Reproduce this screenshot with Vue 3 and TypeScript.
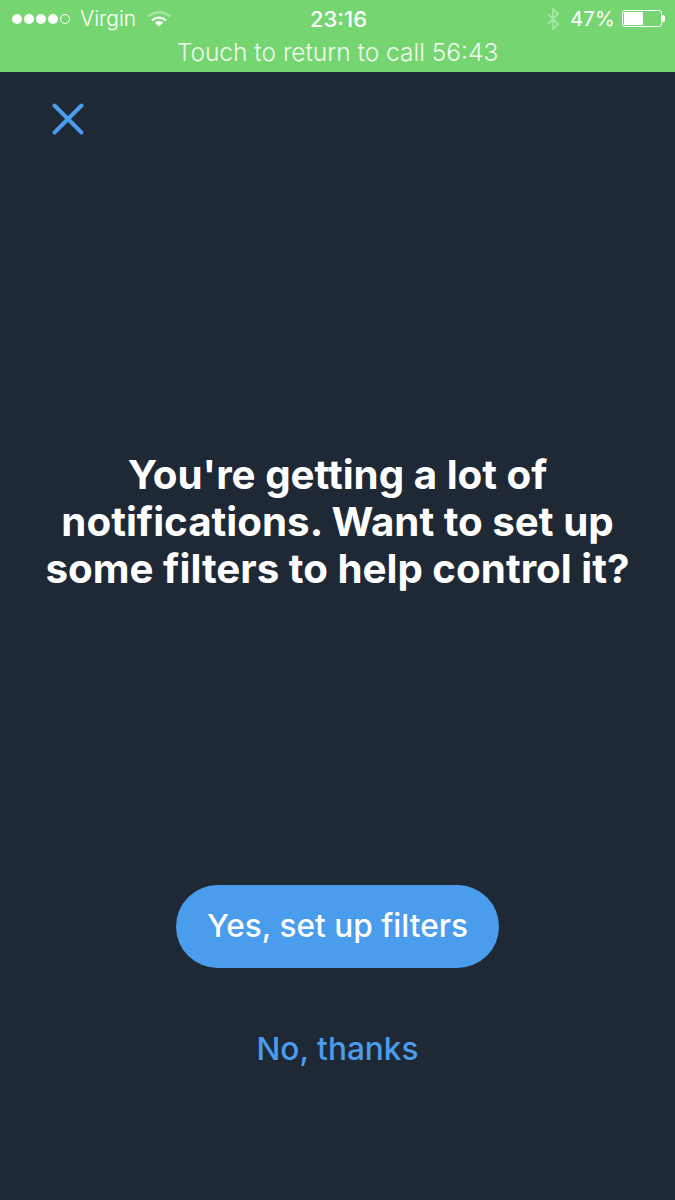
<script setup lang="ts">
const dots = [1, 1, 1, 1, 0]
</script>

<template>
  <div class="screen">
    <div class="banner">
      <div class="status">
        <div class="left">
          <span v-for="(d, i) in dots" :key="i" class="dot" :class="{ empty: !d }"></span>
          <span class="carrier">Virgin</span>
          <svg class="wifi" width="24" height="16" viewBox="0 0 24 16">
            <path d="M1 5.500C7.500 0 16.500 0 23 5.500" fill="none" stroke="#fff" stroke-opacity=".4" stroke-width="2.200"/>
            <path d="M5 9.300C9.200 5.700 14.800 5.700 19 9.300" fill="none" stroke="#fff" stroke-width="2.400"/>
            <path d="M7.800 11.500C10.300 9.500 13.700 9.500 16.200 11.500L12 15.500Z" fill="#fff"/>
          </svg>
        </div>
        <span class="time">23:16</span>
        <div class="right">
          <svg class="bt" width="14" height="22" viewBox="0 0 14 22">
            <path d="M2 6L12 16L7 21V1L12 6L2 16" fill="none" stroke="#fff" stroke-opacity=".35" stroke-width="1.800"/>
          </svg>
          <span class="pct">47%</span>
          <div class="battery"><div class="charge"></div></div>
          <div class="nub"></div>
        </div>
      </div>
      <div class="call">Touch to return to call 56:43</div>
    </div>
    <main class="body">
      <button class="close" aria-label="Close">
        <svg width="34" height="34" viewBox="0 0 34 34">
          <path d="M3.500 3.500L30.500 30.500M30.500 3.500L3.500 30.500" stroke="#4a9cec" stroke-width="4" stroke-linecap="round"/>
        </svg>
      </button>
      <h1 class="question">You're getting a lot of notifications. Want to set up some filters to help control it?</h1>
      <button class="yes">Yes, set up filters</button>
      <button class="no">No, thanks</button>
    </main>
  </div>
</template>

<style>
html, body { margin: 0; background: #1f2935; }
</style>

<style scoped>
.screen {
  width: 675px;
  height: 1200px;
  display: flex;
  flex-direction: column;
  background: #1f2935;
  font-family: Inter, "Liberation Sans", sans-serif;
  overflow: hidden;
}
.banner {
  height: 72px;
  background: #75d671;
  color: #fff;
  flex: none;
}
.status {
  height: 37px;
  display: grid;
  grid-template-columns: 1fr auto 1fr;
  align-items: center;
  padding: 0 10px 0 12px;
  font-size: 21px;
}
.left, .right { display: flex; align-items: center; }
.right { justify-content: flex-end; }
.dot {
  width: 10px;
  height: 10px;
  border-radius: 50%;
  background: #fff;
  margin-right: 2px;
  box-sizing: border-box;
}
.dot.empty { background: none; border: 1px solid #fff; }
.carrier { margin-left: 8px; font-weight: 300; }
.wifi { margin-left: 11px; }
.time { font-size: 22px; font-weight: 500; }
.bt { margin-right: 10px; }
.pct { font-size: 20.500px; font-weight: 400; margin-right: 7px; }
.battery {
  box-sizing: border-box;
  width: 40px;
  height: 17px;
  border: 1px solid #fff;
  border-radius: 3px;
  padding: 1px;
}
.charge { width: 19px; height: 100%; background: #fff; border-radius: 1px; }
.nub { width: 3px; height: 7px; background: #fff; border-radius: 0 2px 2px 0; margin-left: 0; }
.call {
  text-align: center;
  font-size: 24.500px;
  font-weight: 300;
  line-height: 30px;
  color: #f1fbf0;
}
.body {
  flex: 1;
  display: flex;
  flex-direction: column;
  align-items: center;
  position: relative;
}
.close {
  position: absolute;
  left: 51px;
  top: 30px;
  width: 34px;
  height: 34px;
  padding: 0;
  border: 0;
  background: none;
}
.close svg { display: block; }
.question {
  margin: 379px 0 0;
  width: 610px;
  text-align: center;
  font-size: 40.300px;
  line-height: 47px;
  font-weight: 700;
  color: #fff;
}
.yes {
  margin-top: 293px;
  width: 323px;
  height: 83px;
  padding: 0 0 3px;
  border: 0;
  border-radius: 42px;
  background: #4a9cec;
  color: #fff;
  font: 500 31.600px Inter, "Liberation Sans", sans-serif;
}
.no {
  margin-top: 59px;
  padding: 0;
  border: 0;
  background: none;
  color: #4a9cec;
  font: 500 31.600px/44px Inter, "Liberation Sans", sans-serif;
}
</style>
